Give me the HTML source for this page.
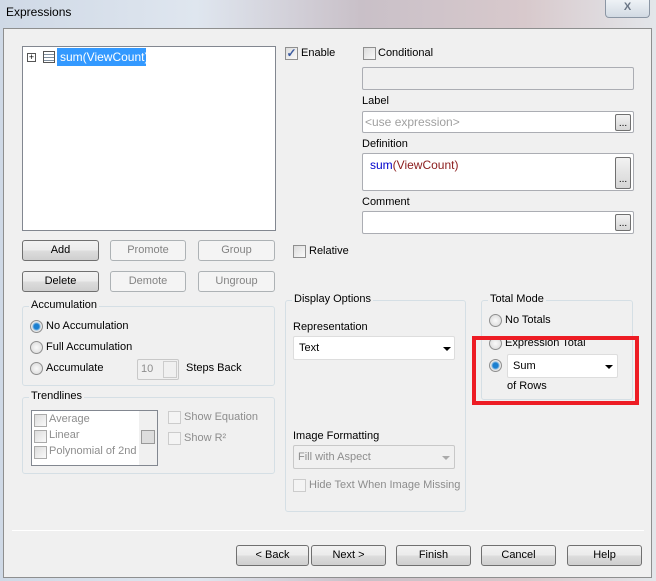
<!DOCTYPE html>
<html><head><style>
*{box-sizing:border-box}
body{margin:0;width:656px;height:581px;overflow:hidden;font-family:"Liberation Sans",sans-serif;font-size:11px;color:#000;background:linear-gradient(90deg,#cfd9e6,#dfe6ef 30%,#c9c0c8 55%,#d8c9cc 80%,#e3e6ea);position:relative}
.a{position:absolute;white-space:nowrap}
.panel{left:3px;top:28px;width:649px;height:550px;background:#f0f0f0;border:1px solid #8e8f8f}
.btn{position:absolute;height:21px;border:1px solid #707070;border-radius:3px;background:linear-gradient(#f2f2f2,#ebebeb 50%,#dddddd 51%,#cfcfcf);text-align:center;line-height:19px}
.dis{border-color:#adb2b5;background:#f4f4f4;color:#838383}
.grp{position:absolute;border:1px solid #d5dfe5;border-radius:3px}
.gt{position:absolute;background:#f0f0f0;padding:0 2px;top:-8px;left:6px}
.box{position:absolute;background:#fff;border:1px solid #abadb3;border-radius:2px}
.cb{position:absolute;width:13px;height:13px;border:1px solid #8f8f8f;background:linear-gradient(135deg,#dcdcdc,#fafafa)}
.rd{position:absolute;width:13px;height:13px;border:1px solid #8f8f8f;border-radius:50%;background:radial-gradient(#fafafa,#d6d6d6)}
.dd{position:absolute;width:0;height:0;border-left:4px solid transparent;border-right:4px solid transparent;border-top:4px solid #000}
.eb{position:absolute;width:16px;border:1px solid #707070;border-radius:2px;background:linear-gradient(#f2f2f2,#d6d6d6);font-size:10px;text-align:center}
.g{color:#8d8d8d}
</style></head><body>
<div class="a" style="left:6px;top:5px;font-size:12px">Expressions</div>
<div class="a" style="left:605px;top:0;width:45px;height:18px;border:1px solid #8b96a4;border-top:none;border-radius:0 0 4px 4px;background:linear-gradient(#eef2f6,#d2dae3);text-align:center;font-weight:bold;color:#6a7585;line-height:15px">X</div>
<div class="a panel"></div>

<div class="box" style="left:22px;top:46px;width:254px;height:185px;border-color:#828790;border-radius:0"></div>
<div class="a" style="left:27px;top:53px;width:9px;height:9px;border:1px solid #555;background:#fff;font-size:9px;line-height:7px;text-align:center">+</div>
<div class="a" style="left:43px;top:51px;width:12px;height:12px;border:1px solid #555;background:repeating-linear-gradient(#fff 0 2px,#8090a0 2px 3px)"></div>
<div class="a" style="left:57px;top:48px;width:89px;height:18px;background:#3399ff;color:#fff;line-height:18px;padding-left:3px;font-size:12px">sum(ViewCount)</div>

<div class="btn" style="left:22px;top:240px;width:77px">Add</div>
<div class="btn dis" style="left:110px;top:240px;width:76px">Promote</div>
<div class="btn dis" style="left:198px;top:240px;width:77px">Group</div>
<div class="btn" style="left:22px;top:271px;width:77px">Delete</div>
<div class="btn dis" style="left:110px;top:271px;width:76px">Demote</div>
<div class="btn dis" style="left:198px;top:271px;width:77px">Ungroup</div>

<div class="grp" style="left:22px;top:306px;width:253px;height:80px"><span class="gt">Accumulation</span></div>
<div class="rd" style="left:30px;top:320px;background:radial-gradient(#1b7fd0 0 2.5px,#7ab3e0 3.5px,#e6e6e6 4.5px)"></div>
<div class="a" style="left:46px;top:320px">No Accumulation</div>
<div class="rd" style="left:30px;top:341px"></div>
<div class="a" style="left:46px;top:341px">Full Accumulation</div>
<div class="rd" style="left:30px;top:362px"></div>
<div class="a" style="left:46px;top:362px">Accumulate</div>
<div class="box" style="left:137px;top:359px;width:42px;height:21px;background:#f0f0f0;border-color:#c8c8c8"><span class="a g" style="left:3px;top:3px">10</span><span class="a" style="left:25px;top:1px;width:14px;height:17px;border:1px solid #ccc"></span></div>
<div class="a" style="left:186px;top:362px">Steps Back</div>

<div class="grp" style="left:22px;top:397px;width:253px;height:77px"><span class="gt">Trendlines</span></div>
<div class="box" style="left:31px;top:410px;width:127px;height:56px;overflow:hidden;border-color:#828790;border-radius:0">
<div class="cb" style="left:2px;top:3px;border-color:#aaa"></div><span class="a g" style="left:17px;top:2px">Average</span>
<div class="cb" style="left:2px;top:19px;border-color:#aaa"></div><span class="a g" style="left:17px;top:18px">Linear</span>
<div class="cb" style="left:2px;top:35px;border-color:#aaa"></div><span class="a g" style="left:17px;top:34px">Polynomial of 2nd d</span>
<div class="a" style="left:107px;top:0;width:18px;height:54px;background:#f0f0f0"><div class="a" style="left:2px;top:19px;width:14px;height:14px;border:1px solid #999;background:#ddd"></div></div>
</div>
<div class="cb" style="left:168px;top:411px;border-color:#ccc;background:#f4f4f4"></div><span class="a g" style="left:184px;top:411px">Show Equation</span>
<div class="cb" style="left:168px;top:432px;border-color:#ccc;background:#f4f4f4"></div><span class="a g" style="left:184px;top:432px">Show R²</span>

<div class="cb" style="left:285px;top:47px;color:#3a5aa0;font-size:12px;line-height:11px;text-align:center;font-weight:bold">✓</div>
<div class="a" style="left:301px;top:47px">Enable</div>
<div class="cb" style="left:363px;top:47px"></div>
<div class="a" style="left:378px;top:47px">Conditional</div>
<div class="box" style="left:362px;top:67px;width:272px;height:23px;background:#f0f0f0"></div>
<div class="a" style="left:362px;top:95px">Label</div>
<div class="box" style="left:362px;top:111px;width:272px;height:22px"><span class="a" style="left:2px;top:3px;color:#a0a0a0;font-size:12px">&lt;use expression&gt;</span></div>
<div class="eb" style="left:615px;top:114px;height:17px;line-height:18px">...</div>
<div class="a" style="left:362px;top:138px">Definition</div>
<div class="box" style="left:362px;top:153px;width:272px;height:38px"><span class="a" style="left:7px;top:4px;color:#0000cc;font-size:12px">sum<span style="color:#8b1c1c">(ViewCount)</span></span></div>
<div class="eb" style="left:615px;top:157px;height:32px;line-height:44px">...</div>
<div class="a" style="left:362px;top:196px">Comment</div>
<div class="box" style="left:362px;top:211px;width:272px;height:23px"></div>
<div class="eb" style="left:615px;top:214px;height:17px;line-height:18px">...</div>
<div class="cb" style="left:293px;top:245px"></div>
<div class="a" style="left:309px;top:245px">Relative</div>

<div class="grp" style="left:285px;top:300px;width:181px;height:212px"><span class="gt">Display Options</span></div>
<div class="a" style="left:293px;top:321px">Representation</div>
<div class="box" style="left:293px;top:336px;width:162px;height:24px;border-color:#ddd"><span class="a" style="left:5px;top:5px">Text</span><span class="dd" style="left:149px;top:10px"></span></div>
<div class="a" style="left:293px;top:430px">Image Formatting</div>
<div class="box" style="left:293px;top:445px;width:162px;height:24px;background:#f0f0f0;border-color:#c8c8c8"><span class="a g" style="left:4px;top:5px">Fill with Aspect</span><span class="dd" style="left:148px;top:10px;border-top-color:#aaa"></span></div>
<div class="cb" style="left:293px;top:479px;border-color:#ccc;background:#f4f4f4"></div>
<div class="a g" style="left:309px;top:479px">Hide Text When Image Missing</div>

<div class="grp" style="left:481px;top:300px;width:152px;height:100px"><span class="gt">Total Mode</span></div>
<div class="rd" style="left:489px;top:314px"></div>
<div class="a" style="left:505px;top:314px">No Totals</div>
<div class="rd" style="left:489px;top:337px"></div>
<div class="a" style="left:505px;top:337px">Expression Total</div>
<div class="rd" style="left:489px;top:359px;background:radial-gradient(#1b7fd0 0 2.5px,#7ab3e0 3.5px,#e6e6e6 4.5px)"></div>
<div class="box" style="left:507px;top:354px;width:111px;height:24px;border-color:#ddd"><span class="a" style="left:5px;top:5px">Sum</span><span class="dd" style="left:97px;top:10px"></span></div>
<div class="a" style="left:507px;top:380px">of Rows</div>
<div class="a" style="left:472px;top:336px;width:167px;height:69px;border:4px solid #ed1c24"></div>

<div class="a" style="left:12px;top:530px;width:632px;height:1px;background:#a0a0a0;border-bottom:1px solid #fff"></div>
<div class="btn" style="left:236px;top:545px;width:73px">&lt; Back</div>
<div class="btn" style="left:311px;top:545px;width:75px">Next &gt;</div>
<div class="btn" style="left:396px;top:545px;width:75px">Finish</div>
<div class="btn" style="left:481px;top:545px;width:75px">Cancel</div>
<div class="btn" style="left:567px;top:545px;width:75px">Help</div>
</body></html>
